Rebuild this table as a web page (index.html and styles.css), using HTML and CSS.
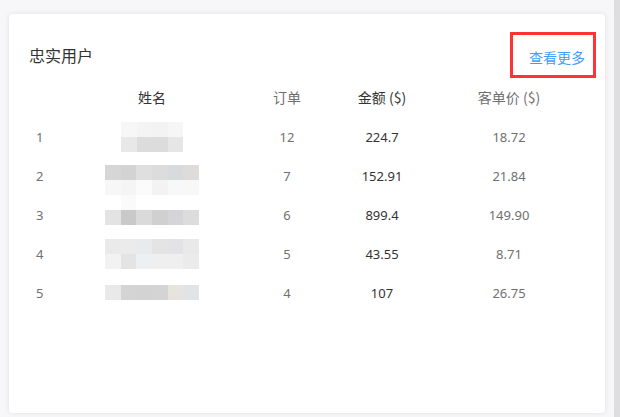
FILE: index.html
```html
<!DOCTYPE html>
<html lang="zh-CN">
<head>
<meta charset="utf-8">
<title>忠实用户</title>
<link rel="stylesheet" href="styles.css">
</head>
<body>
<div class="page">
  <main class="main">
    <section class="card">
      <header class="card-head">
        <h2 class="title">忠实用户</h2>
        <a class="more" href="#">查看更多</a>
        <span class="highlight"></span>
      </header>
      <div class="table">
        <div class="row head">
          <div class="c idx"></div>
          <div class="c name dark">姓名</div>
          <div class="c orders">订单</div>
          <div class="c amount dark">金额 ($)</div>
          <div class="c price">客单价 ($)</div>
        </div>
        <div class="row">
          <div class="c idx">1</div>
          <div class="c name">
            <div class="mosaic cols4 r1">
              <i style="background:#f7f7f7"></i><i style="background:#f4f4f4"></i><i style="background:#f3f3f3"></i><i style="background:#f5f6f5"></i>
              <i style="background:#e8e8e8"></i><i style="background:#dcdcdc"></i><i style="background:#dcdcdc"></i><i style="background:#e6e6e6"></i>
            </div>
          </div>
          <div class="c orders">12</div>
          <div class="c amount">224.7</div>
          <div class="c price">18.72</div>
        </div>
        <div class="row">
          <div class="c idx">2</div>
          <div class="c name">
            <div class="mosaic cols6 r2">
              <i style="background:#d6d6d6"></i><i style="background:#d3d3d3"></i><i style="background:#dfdfdf"></i><i style="background:#dcdcdc"></i><i style="background:#d8dbdb"></i><i style="background:#dedcdb"></i>
              <i style="background:#f7f7f7"></i><i style="background:#f5f5f5"></i><i style="background:#fbfbfb"></i><i style="background:#f3f3f3"></i><i style="background:#f8f8f8"></i><i style="background:#f8f8f8"></i>
            </div>
          </div>
          <div class="c orders">7</div>
          <div class="c amount">152.91</div>
          <div class="c price">21.84</div>
        </div>
        <div class="row">
          <div class="c idx">3</div>
          <div class="c name">
            <div class="mosaic cols6 r3">
              <i></i><i style="background:#fafafa"></i><i></i><i></i><i></i><i></i>
              <i style="background:#e3e3e3"></i><i style="background:#c9c9c9"></i><i style="background:#dadada"></i><i style="background:#d0d0d0"></i><i style="background:#d5d5d8"></i><i style="background:#dcdcdc"></i>
            </div>
          </div>
          <div class="c orders">6</div>
          <div class="c amount">899.4</div>
          <div class="c price">149.90</div>
        </div>
        <div class="row">
          <div class="c idx">4</div>
          <div class="c name">
            <div class="mosaic cols6">
              <i style="background:#eaeaea"></i><i style="background:#ebebeb"></i><i style="background:#e9eaec"></i><i style="background:#e4e4e4"></i><i style="background:#e3e3e5"></i><i style="background:#e9e9e9"></i>
              <i style="background:#f2f2f2"></i><i style="background:#e4e4e4"></i><i style="background:#eeeff1"></i><i style="background:#efefef"></i><i style="background:#efefef"></i><i style="background:#ebebeb"></i>
            </div>
          </div>
          <div class="c orders">5</div>
          <div class="c amount">43.55</div>
          <div class="c price">8.71</div>
        </div>
        <div class="row">
          <div class="c idx">5</div>
          <div class="c name">
            <div class="mosaic cols6">
              <i style="background:#e9e9e9"></i><i style="background:#d4d4d4"></i><i style="background:#d3d3d3"></i><i style="background:#d4d4d4"></i><i style="background:#e7e4e0"></i><i style="background:#e1e4e6"></i>
            </div>
          </div>
          <div class="c orders">4</div>
          <div class="c amount">107</div>
          <div class="c price">26.75</div>
        </div>
      </div>
    </section>
  </main>
  <div class="edge"></div>
</div>
</body>
</html>
```

FILE: styles.css
```css
* { box-sizing: border-box; }
html, body { margin: 0; padding: 0; }
body {
  background: #f7f7f9;
  font-family: "Noto Sans", "Noto Sans CJK SC", sans-serif;
  color: #333;
}
.page {
  display: flex;
  height: 417px;
}
.main {
  width: 614px;
  padding: 14px 9px 4px 9px;
}
.edge {
  width: 6px;
  background: #dedede;
  margin-left: auto;
}
.card {
  background: #fff;
  height: 399px;
  border-radius: 4px;
  box-shadow: 0 0 5px rgba(40, 40, 80, 0.10);
  padding: 0 20px;
}
.card-head {
  position: relative;
  display: flex;
  justify-content: space-between;
  align-items: center;
  padding-top: 30px;
  height: 52px;
}
.title {
  margin: 0;
  font-family: "Noto Sans CJK SC", sans-serif;
  font-size: 16px;
  font-weight: normal;
  line-height: 22px;
  color: #333;
}
.more {
  font-family: "Noto Sans CJK SC", sans-serif;
  font-size: 14px;
  line-height: 22px;
  color: #409eff;
  text-decoration: none;
  margin-top: 3px;
}
.highlight {
  position: absolute;
  left: 481px;
  top: 18px;
  width: 86px;
  height: 46px;
  border: 3px solid #ff3333;
}
.table {
  margin-top: 11px;
}
.row {
  display: grid;
  grid-template-columns: 60px 126px 144px 46px 208px;
  height: 39px;
  align-items: center;
  font-size: 13px;
  color: #707070;
}
.row.head {
  height: 40px;
  font-size: 14px;
}
.row.head .c {
  font-family: "Noto Sans CJK SC", sans-serif;
}
.c {
  display: flex;
  justify-content: center;
  align-items: center;
  white-space: nowrap;
  height: 100%;
}
.c.idx {
  justify-content: flex-start;
  padding-left: 7px;
}
.c.amount, .c.dark { color: #333; }
.mosaic {
  display: grid;
  grid-auto-rows: 15px;
}
.mosaic i { display: block; background: #fff; }
.cols4 { grid-template-columns: repeat(4, 15.5px); }
.cols6 { grid-template-columns: repeat(6, 15.6px); }
.r2 { margin-top: 8px; }
.r3 { margin-bottom: 10px; }
```
